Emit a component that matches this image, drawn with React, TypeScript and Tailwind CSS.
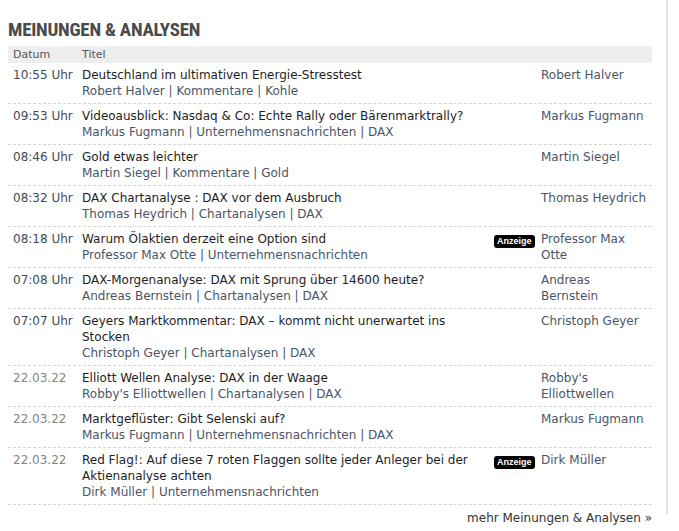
type Item = {
  time: string;
  old?: boolean;
  title: string;
  meta: string[];
  author: string;
  ad?: boolean;
};

const items: Item[] = [
  { time: "10:55 Uhr", title: "Deutschland im ultimativen Energie-Stresstest", meta: ["Robert Halver", "Kommentare", "Kohle"], author: "Robert Halver" },
  { time: "09:53 Uhr", title: "Videoausblick: Nasdaq & Co: Echte Rally oder Bärenmarktrally?", meta: ["Markus Fugmann", "Unternehmensnachrichten", "DAX"], author: "Markus Fugmann" },
  { time: "08:46 Uhr", title: "Gold etwas leichter", meta: ["Martin Siegel", "Kommentare", "Gold"], author: "Martin Siegel" },
  { time: "08:32 Uhr", title: "DAX Chartanalyse : DAX vor dem Ausbruch", meta: ["Thomas Heydrich", "Chartanalysen", "DAX"], author: "Thomas Heydrich" },
  { time: "08:18 Uhr", title: "Warum Ölaktien derzeit eine Option sind", meta: ["Professor Max Otte", "Unternehmensnachrichten"], author: "Professor Max Otte", ad: true },
  { time: "07:08 Uhr", title: "DAX-Morgenanalyse: DAX mit Sprung über 14600 heute?", meta: ["Andreas Bernstein", "Chartanalysen", "DAX"], author: "Andreas Bernstein" },
  { time: "07:07 Uhr", title: "Geyers Marktkommentar: DAX – kommt nicht unerwartet ins Stocken", meta: ["Christoph Geyer", "Chartanalysen", "DAX"], author: "Christoph Geyer" },
  { time: "22.03.22", old: true, title: "Elliott Wellen Analyse: DAX in der Waage", meta: ["Robby's Elliottwellen", "Chartanalysen", "DAX"], author: "Robby's Elliottwellen" },
  { time: "22.03.22", old: true, title: "Marktgeflüster: Gibt Selenski auf?", meta: ["Markus Fugmann", "Unternehmensnachrichten", "DAX"], author: "Markus Fugmann" },
  { time: "22.03.22", old: true, title: "Red Flag!: Auf diese 7 roten Flaggen sollte jeder Anleger bei der Aktienanalyse achten", meta: ["Dirk Müller", "Unternehmensnachrichten"], author: "Dirk Müller", ad: true },
];

const cols = "grid grid-cols-[74px_412px_47px_111px]";

const Row: React.FC<{ item: Item }> = ({ item }) => {
  return (
    <div className={`${cols} border-b border-dashed border-[#d4d4d4] py-1 leading-4`}>
      <div className={`pl-[5px] ${item.old ? "text-[#858585]" : "text-[#3e4a57]"}`}>{item.time}</div>
      <div className="pr-1">
        <div className="text-[#1e1e1e]">{item.title}</div>
        <div className="text-[#4a5566]">
          {item.meta.map((m, i) => (
            <span key={i}>
              {i > 0 && " | "}
              {m}
            </span>
          ))}
        </div>
      </div>
      <div>
        {item.ad && (
          <span className="mt-1 inline-block rounded-[3px] bg-black px-[3px] font-['Liberation_Sans'] text-[9px] leading-[13px] font-bold text-white">
            Anzeige
          </span>
        )}
      </div>
      <div className="pr-[4px] text-[#4a5566]">{item.author}</div>
    </div>
  );
};

export default function App() {
  return (
    <div className="flex h-[531px] w-[679px] bg-white font-['DejaVu_Sans',sans-serif] text-[12px]">
      <section className="ml-2 w-[644px]">
        <h2 className="mt-[19px] mb-[5px] font-['Roboto',sans-serif] text-[19px] leading-[22px] font-bold tracking-[-0.25px] text-[#4a4a4a] [font-stretch:condensed]">
          MEINUNGEN &amp; ANALYSEN
        </h2>
        <div className={`${cols} h-[17px] bg-[#eeeeee] text-[11px] leading-[17px] text-[#555]`}>
          <div className="pl-[5px]">Datum</div>
          <div>Titel</div>
        </div>
        {items.map((item, i) => (
          <Row key={i} item={item} />
        ))}
        <div className="mt-[5px] text-right leading-4 text-[#333]">mehr Meinungen &amp; Analysen »</div>
      </section>
      <div className="ml-[14px] h-[514px] w-[2px] bg-[#e0e0e0]" />
    </div>
  );
}
